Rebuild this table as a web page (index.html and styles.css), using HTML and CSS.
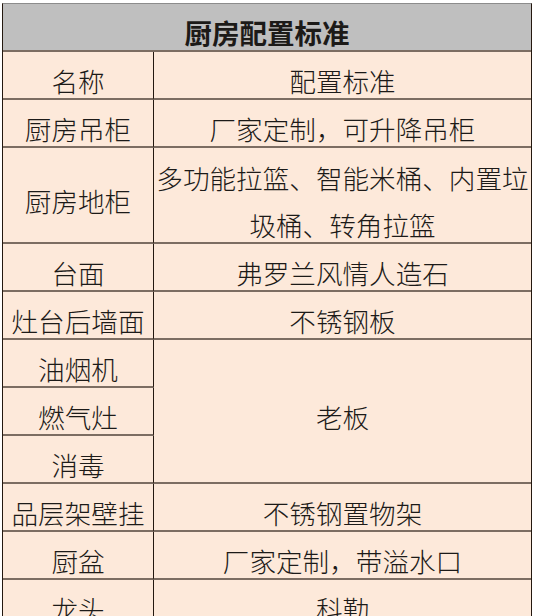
FILE: index.html
```html
<!DOCTYPE html>
<html lang="zh-CN">
<head>
<meta charset="utf-8">
<title>厨房配置标准</title>
<link rel="stylesheet" href="styles.css">
</head>
<body>
<div class="sheet">
  <div class="cell title">厨房配置标准</div>

  <div class="cell name">名称</div>
  <div class="cell value">配置标准</div>

  <div class="cell name">厨房吊柜</div>
  <div class="cell value">厂家定制，可升降吊柜</div>

  <div class="cell name span2">厨房地柜</div>
  <div class="cell value span2 multi">多功能拉篮、智能米桶、内置垃圾桶、转角拉篮</div>

  <div class="cell name">台面</div>
  <div class="cell value">弗罗兰风情人造石</div>

  <div class="cell name">灶台后墙面</div>
  <div class="cell value">不锈钢板</div>

  <div class="cell name">油烟机</div>
  <div class="cell value span3">老板</div>
  <div class="cell name">燃气灶</div>
  <div class="cell name">消毒</div>

  <div class="cell name">品层架壁挂</div>
  <div class="cell value">不锈钢置物架</div>

  <div class="cell name">厨盆</div>
  <div class="cell value">厂家定制，带溢水口</div>

  <div class="cell name">龙头</div>
  <div class="cell value">科勤</div>
</div>
</body>
</html>
```

FILE: styles.css
```css
html, body {
  margin: 0;
  padding: 0;
  background: #ffffff;
}

body {
  font-family: "Noto Sans CJK SC", "Noto Sans", sans-serif;
  color: #1c1a18;
}

.sheet {
  margin: 3px 0 0 2px;
  width: 530px;
  box-sizing: border-box;
  display: grid;
  grid-template-columns: 151px 377px;
  grid-auto-rows: 48px;
  border-left: 1px solid #24180f;
  border-right: 1px solid #24180f;
  border-top: 1px solid #8c8c8c;
  background: #fde9da;
}

.cell {
  display: flex;
  align-items: center;
  justify-content: center;
  text-align: center;
  box-sizing: border-box;
  border-bottom: 2px solid #7c6d62;
  padding-top: 12px;
  font-size: 26.6px;
  font-weight: 300;
  line-height: 30px;
  white-space: normal;
}

.title {
  grid-column: 1 / span 2;
  background: #bfbfbf;
  font-weight: 700;
  font-size: 27.5px;
  padding-top: 10px;
}

.name {
  border-right: 1px solid #24180f;
}

.span2 {
  grid-row: span 2;
}

.span3 {
  grid-row: span 3;
}

.multi {
  line-height: 47px;
  padding-top: 12px;
}
```
